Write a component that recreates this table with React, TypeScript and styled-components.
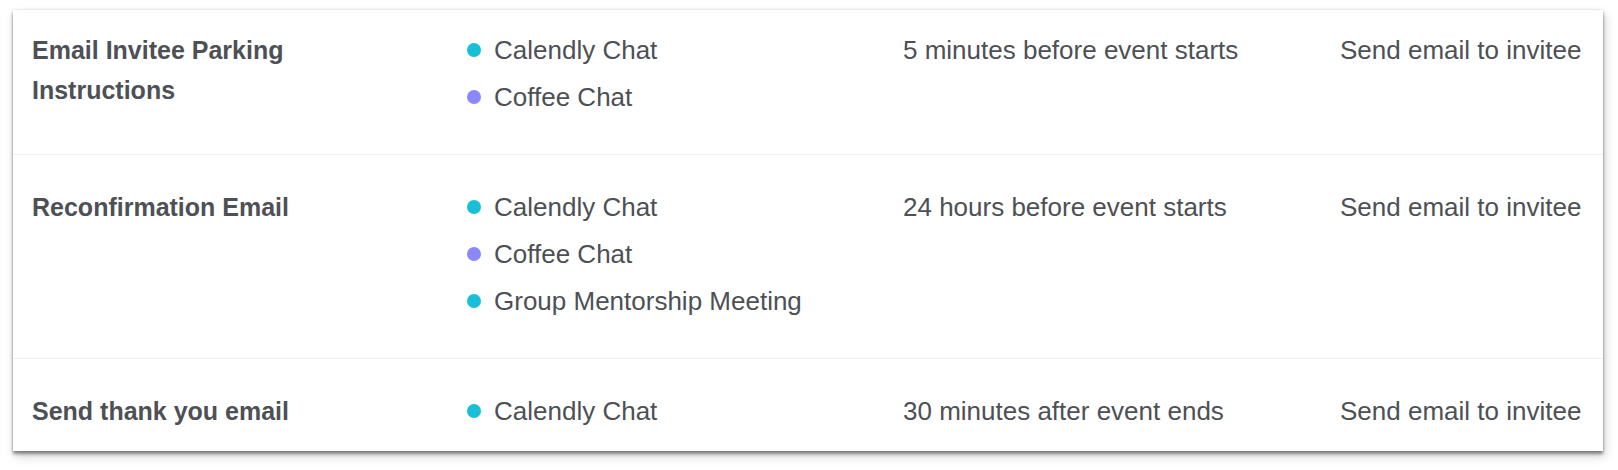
import React from 'react';
import styled, { createGlobalStyle } from 'styled-components';

const GlobalStyle = createGlobalStyle`
  body {
    margin: 0;
    background: #ffffff;
    font-family: "Liberation Sans", Arial, sans-serif;
    color: #4d5055;
  }
`;

const Page = styled.div`
  box-sizing: border-box;
  min-height: 470px;
  padding: 10px 15px 19px 13px;
`;

const Card = styled.div`
  background: #ffffff;
  box-shadow: 0 0 2px rgba(0, 0, 0, 0.18), 0 3px 3px rgba(0, 0, 0, 0.4),
    2px 5px 10px rgba(0, 0, 0, 0.18);
`;

const Row = styled.div`
  display: grid;
  grid-template-columns: 435px 436px 437px 1fr;
  padding: 32px 19px 37px;
  border-top: 1px solid #f0f0f6;
  &:first-child {
    padding-top: 20px;
    border-top: none;
  }
  &:last-child {
    padding-bottom: 20px;
  }
`;

const Title = styled.div`
  font-size: 25px;
  font-weight: 700;
  line-height: 40px;
  color: #4d5055;
  padding-right: 150px;
`;

const EventList = styled.ul`
  list-style: none;
  margin: 0;
  padding: 0;
  display: flex;
  flex-direction: column;
  gap: 7px;
`;

const EventItem = styled.li`
  display: flex;
  align-items: center;
  gap: 13px;
  font-size: 26px;
  line-height: 40px;
`;

const Dot = styled.span<{ $color: string }>`
  width: 14px;
  height: 14px;
  border-radius: 50%;
  flex: none;
  background: ${props => props.$color};
`;

const Cell = styled.div`
  font-size: 26px;
  line-height: 40px;
  white-space: nowrap;
`;

const CYAN = '#17bfd7';
const PURPLE = '#8a88fb';

interface Workflow {
  id: number;
  title: string;
  events: { name: string; color: string }[];
  when: string;
  action: string;
}

const workflows: Workflow[] = [
  {
    id: 1,
    title: 'Email Invitee Parking Instructions',
    events: [
      { name: 'Calendly Chat', color: CYAN },
      { name: 'Coffee Chat', color: PURPLE },
    ],
    when: '5 minutes before event starts',
    action: 'Send email to invitee',
  },
  {
    id: 2,
    title: 'Reconfirmation Email',
    events: [
      { name: 'Calendly Chat', color: CYAN },
      { name: 'Coffee Chat', color: PURPLE },
      { name: 'Group Mentorship Meeting', color: CYAN },
    ],
    when: '24 hours before event starts',
    action: 'Send email to invitee',
  },
  {
    id: 3,
    title: 'Send thank you email',
    events: [{ name: 'Calendly Chat', color: CYAN }],
    when: '30 minutes after event ends',
    action: 'Send email to invitee',
  },
];

function App() {
  return (
    <Page>
      <GlobalStyle />
      <Card>
        {workflows.map(wf => (
          <Row key={wf.id}>
            <Title>{wf.title}</Title>
            <EventList>
              {wf.events.map(ev => (
                <EventItem key={ev.name}>
                  <Dot $color={ev.color} />
                  {ev.name}
                </EventItem>
              ))}
            </EventList>
            <Cell>{wf.when}</Cell>
            <Cell>{wf.action}</Cell>
          </Row>
        ))}
      </Card>
    </Page>
  );
}

export default App;
